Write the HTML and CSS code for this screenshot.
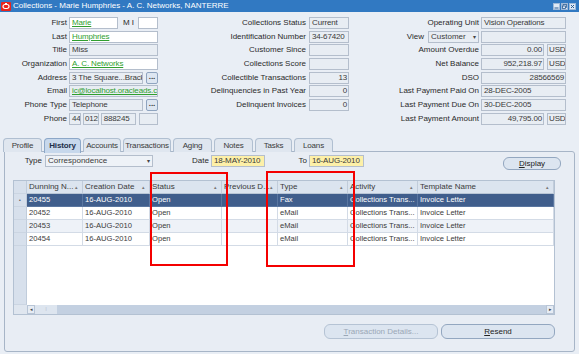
FILE: index.html
```html
<!DOCTYPE html>
<html lang="en">
<head>
    <meta charset="UTF-8">
    <title>Collections</title>
    <link rel="stylesheet" href="styles.css">
</head>
<body>
    <div class="window">
        <div class="titlebar">
            <svg class="app-icon" width="10" height="9" viewBox="0 0 10 9">
                <rect x="0" y="0" width="10" height="9" rx="1" fill="#e8231c"/>
                <rect x="2" y="2.5" width="6" height="4" rx="2" fill="none" stroke="#fff" stroke-width="1.2"/>
                <rect x="4" y="1" width="2" height="1.5" fill="#fff"/>
            </svg>
            <span class="title">Collections - Marie Humphries - A. C. Networks, NANTERRE</span>
            <div class="win-controls">
                <svg width="7" height="7" viewBox="0 0 7 7"><rect x="0.5" y="0.5" width="6" height="6" fill="#dfe9f5" stroke="#9fb9d8"/><rect x="1.5" y="4.5" width="4" height="1" fill="#2c5d94"/></svg>
                <svg width="7" height="7" viewBox="0 0 7 7"><rect x="0.5" y="0.5" width="6" height="6" fill="#dfe9f5" stroke="#9fb9d8"/><rect x="2" y="1.5" width="3.5" height="3" fill="none" stroke="#2c5d94" stroke-width="0.8"/><rect x="1.5" y="3" width="3" height="2.5" fill="#dfe9f5" stroke="#2c5d94" stroke-width="0.8"/></svg>
                <svg width="7" height="7" viewBox="0 0 7 7"><rect x="0.5" y="0.5" width="6" height="6" fill="#dfe9f5" stroke="#9fb9d8"/><path d="M2 2 L5 5 M5 2 L2 5" stroke="#2c5d94" stroke-width="1"/></svg>
            </div>
        </div>

        <div class="summary">
            <!-- contact details -->
            <div class="col col-contact">
                <span class="lbl">First</span>
                <div class="fld-group">
                    <span class="fld edit w-first"><span class="link">Marie</span></span>
                    <span class="lbl mi">M I</span>
                    <span class="fld edit w-mi"></span>
                </div>
                <span class="lbl">Last</span>
                <span class="fld edit"><span class="link">Humphries</span></span>
                <span class="lbl">Title</span>
                <span class="fld">Miss</span>
                <span class="lbl">Organization</span>
                <span class="fld edit"><span class="link">A. C. Networks</span></span>
                <span class="lbl">Address</span>
                <div class="fld-group">
                    <span class="fld grow">3 The Square...Brackı</span>
                    <span class="lov-btn">...</span>
                </div>
                <span class="lbl">Email</span>
                <span class="fld"><span class="link">ic@localhost.oracleads.co</span></span>
                <span class="lbl">Phone Type</span>
                <div class="fld-group">
                    <span class="fld grow">Telephone</span>
                    <span class="lov-btn">...</span>
                </div>
                <span class="lbl">Phone</span>
                <div class="fld-group phone">
                    <span class="fld w-cc">44</span>
                    <span class="fld w-area">0125</span>
                    <span class="fld w-num">888245</span>
                    <span class="fld w-ext"></span>
                </div>
            </div>

            <!-- collections status -->
            <div class="col col-status">
                <span class="lbl">Collections Status</span>
                <span class="fld">Current</span>
                <span class="lbl">Identification Number</span>
                <span class="fld">34-67420</span>
                <span class="lbl">Customer Since</span>
                <span class="fld"></span>
                <span class="lbl">Collections Score</span>
                <span class="fld"></span>
                <span class="lbl">Collectible Transactions</span>
                <span class="fld num">13</span>
                <span class="lbl">Delinquencies in Past Year</span>
                <span class="fld num">0</span>
                <span class="lbl">Delinquent Invoices</span>
                <span class="fld num">0</span>
            </div>

            <!-- balances -->
            <div class="col col-balance">
                <span class="lbl">Operating Unit</span>
                <span class="fld">Vision Operations</span>
                <div class="lbl view-lbl">
                    <span>View</span>
                    <span class="select view-select">Customer<span class="arrow">▾</span></span>
                </div>
                <span class="fld"></span>
                <span class="lbl">Amount Overdue</span>
                <div class="fld-group">
                    <span class="fld num grow">0.00</span>
                    <span class="fld cur">USD</span>
                </div>
                <span class="lbl">Net Balance</span>
                <div class="fld-group">
                    <span class="fld num grow">952,218.97</span>
                    <span class="fld cur">USD</span>
                </div>
                <span class="lbl">DSO</span>
                <span class="fld num">28566569</span>
                <span class="lbl">Last Payment Paid On</span>
                <span class="fld">28-DEC-2005</span>
                <span class="lbl">Last Payment Due On</span>
                <span class="fld">30-DEC-2005</span>
                <span class="lbl">Last Payment Amount</span>
                <div class="fld-group">
                    <span class="fld num grow">49,795.00</span>
                    <span class="fld cur">USD</span>
                </div>
            </div>
        </div>

        <div class="tabs">
            <span class="tab t-profile">Profile</span>
            <span class="tab t-history active">History</span>
            <span class="tab t-accounts">Accounts</span>
            <span class="tab t-trans">Transactions</span>
            <span class="tab t-aging">Aging</span>
            <span class="tab t-notes">Notes</span>
            <span class="tab t-tasks">Tasks</span>
            <span class="tab t-loans">Loans</span>
        </div>

        <div class="panel">
            <div class="filter-row">
                <span class="lbl type-lbl">Type</span>
                <span class="select type-select">Correspondence<span class="arrow">▾</span></span>
                <span class="lbl date-lbl">Date</span>
                <span class="fld req w-date">18-MAY-2010</span>
                <span class="lbl to-lbl">To</span>
                <span class="fld req w-date2">16-AUG-2010</span>
                <button class="btn display-btn"><u>D</u>isplay</button>
            </div>

            <div class="grid">
                <div class="table">
                    <span class="rh"></span>
                    <span class="th">Dunning N...<i class="sort">▴</i></span>
                    <span class="th">Creation Date<i class="sort">▴</i></span>
                    <span class="th">Status<i class="sort">▴</i></span>
                    <span class="th">Previous D...<i class="sort">▴</i></span>
                    <span class="th">Type<i class="sort">▴</i></span>
                    <span class="th">Activity<i class="sort">▴</i></span>
                    <span class="th">Template Name<i class="sort">▴</i></span>

                    <span class="rh sel-rh">•</span>
                    <span class="td sel">20455</span>
                    <span class="td sel">16-AUG-2010</span>
                    <span class="td sel">Open</span>
                    <span class="td sel"></span>
                    <span class="td sel">Fax</span>
                    <span class="td sel">Collections Trans...</span>
                    <span class="td sel">Invoice Letter</span>

                    <span class="rh"></span>
                    <span class="td">20452</span>
                    <span class="td">16-AUG-2010</span>
                    <span class="td">Open</span>
                    <span class="td"></span>
                    <span class="td">eMail</span>
                    <span class="td">Collections Trans...</span>
                    <span class="td">Invoice Letter</span>

                    <span class="rh"></span>
                    <span class="td alt">20453</span>
                    <span class="td alt">16-AUG-2010</span>
                    <span class="td alt">Open</span>
                    <span class="td alt"></span>
                    <span class="td alt">eMail</span>
                    <span class="td alt">Collections Trans...</span>
                    <span class="td alt">Invoice Letter</span>

                    <span class="rh"></span>
                    <span class="td">20454</span>
                    <span class="td">16-AUG-2010</span>
                    <span class="td">Open</span>
                    <span class="td"></span>
                    <span class="td">eMail</span>
                    <span class="td">Collections Trans...</span>
                    <span class="td">Invoice Letter</span>

                    <span class="rh"></span>
                    <span class="filler"></span>
                </div>
                <div class="hscroll">
                    <span class="hs-corner"></span>
                    <span class="hs-btn">◂</span>
                    <span class="hs-thumb">⁞</span>
                    <span class="hs-track"></span>
                    <span class="hs-btn">▸</span>
                </div>
            </div>

            <div class="actions">
                <button class="btn wide" disabled><u>T</u>ransaction Details...</button>
                <button class="btn wide"><u>R</u>esend</button>
            </div>
        </div>

        <!-- highlight boxes drawn over the grid -->
        <div class="mark mark-status"></div>
        <div class="mark mark-type"></div>
    </div>
</body>
</html>
```

FILE: styles.css
```css
* {
    margin: 0;
    padding: 0;
    box-sizing: border-box;
}
body {
    font: 8px "Liberation Sans", Arial, sans-serif;
    color: #2a2a2a;
    background: #e9eef5;
}
.window {
    position: relative;
    width: 579px;
    height: 354px;
    overflow: hidden;
    background: #e9eef5;
}
.titlebar {
    height: 12px;
    display: flex;
    align-items: center;
    background: #3179c2;
    color: #fff;
    padding-left: 1px;
}
.app-icon {
    margin-right: 2px;
}
.title {
    flex: 1;
    white-space: nowrap;
    line-height: 12px;
}
.win-controls {
    display: flex;
    gap: 1px;
    padding-right: 3px;
}

/* summary form */
.summary {
    display: grid;
    grid-template-columns: 158px 191px 217px;
    padding-top: 5px;
}
.col {
    display: grid;
    grid-auto-rows: 12px;
    row-gap: 1.7px;
}
.col-contact {
    grid-template-columns: 67px 89px;
    column-gap: 2px;
}
.col-status {
    grid-template-columns: 148px 40px;
    column-gap: 3px;
}
.col-balance {
    grid-template-columns: 130px 85px;
    column-gap: 2px;
}
.lbl {
    text-align: right;
    line-height: 12px;
    white-space: nowrap;
    color: #2a2a2a;
}
.fld {
    display: block;
    height: 12px;
    border: 1px solid #b4becc;
    background: #e8edf3;
    padding: 0 1px 0 2px;
    line-height: 10px;
    letter-spacing: -0.15px;
    white-space: nowrap;
    overflow: hidden;
    color: #3a3a3a;
}
.fld.edit {
    background: #fff;
}
.fld.num {
    text-align: right;
}
.fld.req {
    background: #fdf0a8;
}
.link {
    color: #2f9f2f;
    text-decoration: underline;
}
.fld-group {
    display: flex;
    gap: 3px;
}
.fld-group .grow {
    flex: 1;
}
.w-first { width: 49px; }
.w-mi { width: 20px; }
.mi {
    flex: 1;
    padding-right: 1px;
}
.lov-btn {
    width: 12px;
    height: 12px;
    border: 1px solid #8fa4bf;
    border-radius: 2px;
    background: #dde6f1;
    text-align: center;
    line-height: 8px;
    font-weight: bold;
    color: #333;
}
.phone {
    gap: 2px;
}
.w-cc { width: 12px; }
.w-area { width: 16px; padding: 0 0 0 1px; }
.w-num { width: 36px; }
.w-ext { width: 19px; margin-left: 1px; }
.cur {
    width: 19px;
    padding: 0 1px;
}
.view-lbl {
    display: flex;
    justify-content: flex-end;
}
.select {
    position: relative;
    display: block;
    height: 12px;
    border: 1px solid #b4becc;
    background: #e8edf3;
    padding: 0 2px;
    line-height: 10px;
    text-align: left;
    color: #3a3a3a;
}
.select .arrow {
    position: absolute;
    right: 2px;
    top: 0;
    font-size: 6px;
    color: #444;
}
.view-select {
    width: 51px;
    margin-left: 4px;
}

/* tabs */
.tabs {
    display: flex;
    gap: 2px;
    padding-left: 3px;
    margin-top: 13px;
    height: 14px;
    position: relative;
    z-index: 1;
}
.tab {
    height: 14px;
    border: 1px solid #b0bfd1;
    border-bottom: none;
    border-radius: 4px 4px 0 0;
    background: #dfe6ef;
    text-align: center;
    line-height: 13px;
    letter-spacing: -0.15px;
    white-space: nowrap;
    color: #3a3a3a;
}
.tab.active {
    height: 15px;
    background: #c7d8ec;
    border-color: #8ca7c8;
    font-weight: bold;
    color: #1d2f4a;
}
.t-profile { width: 39px; }
.t-history { width: 37px; }
.t-accounts { width: 38px; }
.t-trans { width: 48px; }
.t-aging { width: 39px; }
.t-notes { width: 39px; }
.t-tasks { width: 37px; }
.t-loans { width: 39px; }

/* history panel */
.panel {
    margin: -1px 0 0 4px;
    width: 571px;
    height: 201px;
    border: 1px solid #a7b5c7;
    border-radius: 0 3px 3px 3px;
    background: #e8edf4;
    padding-top: 3px;
}
.filter-row {
    display: flex;
    align-items: flex-start;
    height: 15px;
}
.type-lbl {
    width: 37px;
    margin-right: 3px;
}
.type-select {
    width: 108px;
    background: #eef2f7;
}
.date-lbl {
    width: 56px;
    margin-right: 2px;
}
.w-date { width: 54px; }
.to-lbl {
    width: 42px;
    margin-right: 2px;
}
.w-date2 { width: 55px; }
.btn {
    font: 8px "Liberation Sans", Arial, sans-serif;
    height: 15px;
    border: 1px solid #93a7c0;
    border-radius: 6px;
    background: #dce5f0;
    color: #222;
}
.btn:disabled {
    color: #9ba7b6;
    border-color: #b5c3d4;
}
.display-btn {
    width: 58px;
    height: 13px;
    margin: 2px 13px 0 auto;
}

/* grid */
.grid {
    margin: 10px 19px 0 8px;
    height: 135px;
    border: 1px solid #b3c1d2;
    display: flex;
    flex-direction: column;
    background: #fff;
}
.table {
    flex: 1;
    display: grid;
    grid-template-columns: 13px 56px 67px 72px 56px 70px 70px 1fr;
    grid-template-rows: 13px repeat(4, 13px) 1fr;
}
.rh {
    background: #d7e0ec;
    border-bottom: 1px solid #cbd5e2;
    border-right: 1px solid #c0ccdb;
    text-align: center;
    font-size: 5px;
    line-height: 12px;
    color: #555;
}
.th {
    position: relative;
    background: #dbe4ef;
    border-right: 1px solid #c1ccda;
    border-bottom: 1px solid #b9c6d6;
    padding-left: 2px;
    line-height: 12px;
    white-space: nowrap;
    overflow: hidden;
    color: #3a3a3a;
}
.sort {
    position: absolute;
    right: 4px;
    top: 0;
    font-style: normal;
    font-size: 5px;
    color: #777;
}
.td {
    border-right: 1px solid #d3dbe6;
    border-bottom: 1px solid #d3dbe6;
    padding-left: 2px;
    font-size: 7.6px;
    line-height: 12px;
    white-space: nowrap;
    overflow: hidden;
    color: #3a3a3a;
}
.td.alt {
    background: #eef2f8;
}
.td.sel {
    background: #405e8c;
    color: #fff;
    border-color: #5a76a0;
}
.filler {
    grid-column: 2 / -1;
    background: #fff;
}
.hscroll {
    display: flex;
    height: 9px;
    background: #c3d0e1;
}
.hs-corner {
    width: 13px;
    background: #dfe6ef;
}
.hs-btn {
    width: 8px;
    background: #e6ecf4;
    border: 1px solid #b8c5d6;
    font-size: 5px;
    line-height: 7px;
    text-align: center;
    color: #444;
}
.hs-thumb {
    width: 22px;
    background: #dde5ef;
    text-align: center;
    font-size: 6px;
    line-height: 9px;
    color: #9aa8ba;
}
.hs-track {
    flex: 1;
}
.actions {
    display: flex;
    justify-content: flex-end;
    gap: 3px;
    margin-top: 9px;
    padding-right: 19px;
}
.btn.wide {
    width: 114px;
}

/* red annotation boxes */
.mark {
    position: absolute;
    border: 2px solid #f40000;
}
.mark-status {
    left: 150px;
    top: 172px;
    width: 78px;
    height: 94px;
}
.mark-type {
    left: 266px;
    top: 171px;
    width: 89px;
    height: 96px;
}
```
